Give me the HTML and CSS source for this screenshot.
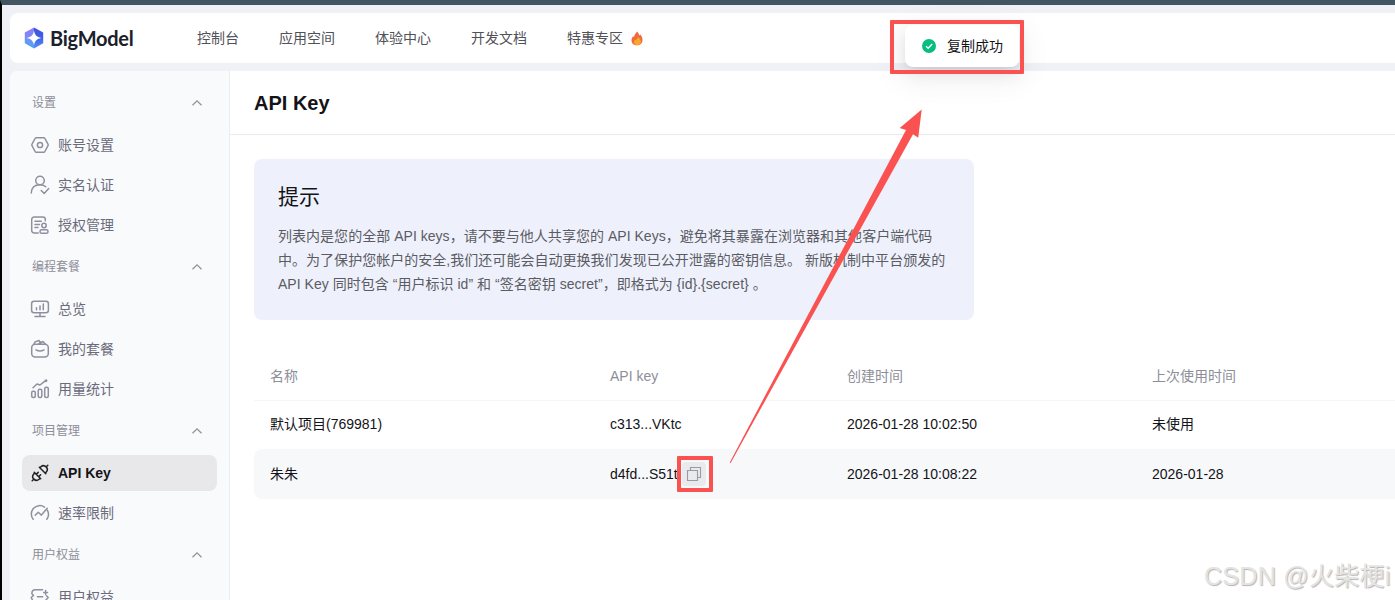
FILE: index.html
```html
<!DOCTYPE html>
<html lang="zh-CN">
<head>
<meta charset="utf-8">
<title>BigModel - API Key</title>
<link rel="stylesheet" href="styles.css">
</head>
<body>
<div class="window">
  <header class="header">
    <div class="logo">
      <svg width="20" height="22" viewBox="0 0 20 22">
        <defs>
          <linearGradient id="lg" x1="0" y1="0" x2="0" y2="1"><stop offset="0" stop-color="#8f7df5"/><stop offset=".45" stop-color="#7c8af8"/><stop offset="1" stop-color="#45a8f8"/></linearGradient>
          <linearGradient id="rg" x1="0" y1="0" x2="0" y2="1"><stop offset="0" stop-color="#3f52e0"/><stop offset=".5" stop-color="#3f62e6"/><stop offset="1" stop-color="#5a90f5"/></linearGradient>
        </defs>
        <path d="M10 .5 .8 5.600v10.600L10 21.500z" fill="url(#lg)"/>
        <path d="M10 .5l9.200 5.100v10.600L10 21.500z" fill="url(#rg)"/>
        <path d="M10 3.800c1 4.600 2.800 6.300 7.200 7.200-4.400.9-6.200 2.600-7.200 7.200-1-4.600-2.800-6.300-7.200-7.200 4.400-.9 6.200-2.600 7.200-7.200z" fill="#fff"/>
      </svg>
      <span class="wordmark">BigModel</span>
    </div>
    <nav class="nav">
      <span>控制台</span><span>应用空间</span><span>体验中心</span><span>开发文档</span>
      <span class="hot">特惠专区
        <svg width="12" height="15" viewBox="0 0 12 15">
          <path d="M6.200.5C7.600 2.300 8 3.300 8.300 4.600c.5-.4.7-.9.700-1.400C10.600 4.900 11.500 7 11.500 9c0 3.300-2.200 5.300-5.500 5.300S.5 12.300.5 9.300c0-2 .8-3.200 1.700-4.400.2.700.4 1 .8 1.300C3.200 4 4.500 2.500 6.200.5z" fill="#ef6a3c"/>
          <path d="M7.500 6.300c1.800 2 2.600 3.300 2.500 4.800-.1 1.700-1.500 3-3.600 3s-3.400-1.100-3.400-2.800c0-1.300.6-2 1.300-2.900.4.500.6.7 1 .8.300-1.200 1-2.200 2.200-2.900z" fill="#f9a928"/>
        </svg>
      </span>
    </nav>
  </header>
  <div class="body">
    <aside class="sidebar">
      <div class="group">设置<svg class="chev" viewBox="0 0 12 8"><path d="M1.500 6.300 6 1.800l4.500 4.500"/></svg></div>
      <div class="item"><svg class="ico" viewBox="0 0 20 20"><path d="M6.400 2.700h7.200a1.500 1.500 0 0 1 1.300.8l3.100 5.700a1.500 1.500 0 0 1 0 1.500l-3.100 5.800a1.500 1.500 0 0 1-1.300.8H6.400a1.500 1.500 0 0 1-1.300-.8L2 10.700a1.500 1.500 0 0 1 0-1.500l3.100-5.700a1.500 1.500 0 0 1 1.300-.8z"/><circle cx="10" cy="10" r="2.600"/></svg>账号设置</div>
      <div class="item"><svg class="ico" viewBox="0 0 20 20"><circle cx="10" cy="5.500" r="4.300"/><path d="M1.300 18c.2-5.200 3.600-8.200 8.700-8.200 2.400 0 4.300.6 5.800 1.900M11.200 15.500l3 3 4.500-5"/></svg>实名认证</div>
      <div class="item"><svg class="ico" viewBox="0 0 20 20"><path d="M8.200 18H4.200a2.500 2.500 0 0 1-2.500-2.500v-11A2.500 2.500 0 0 1 4.200 2h8.600a2.500 2.500 0 0 1 2.500 2.500v1.300M5 6.200h6.300M5 9.500h4.500M5 12.500h3"/><circle cx="14" cy="10.500" r="2.200"/><rect x="10" y="14.800" width="8" height="3.500" rx="1.600"/></svg>授权管理</div>
      <div class="group">编程套餐<svg class="chev" viewBox="0 0 12 8"><path d="M1.500 6.300 6 1.800l4.500 4.500"/></svg></div>
      <div class="item"><svg class="ico" viewBox="0 0 20 20"><rect x="1.600" y="2.200" width="16.800" height="11.600" rx="2.500"/><path d="M10 14v3M5 17.400h10M6.500 8.800v2M10 7v3.800M13.300 5v5.800"/></svg>总览</div>
      <div class="item"><svg class="ico" viewBox="0 0 20 20"><rect x="1.700" y="5.300" width="16.600" height="12.700" rx="3.500"/><path d="M6 10.800c2.500 1.500 5.500 1.500 8 0M4 5l1-2.100 4-1.400 2.200 3M9 4.500l4-2 2.500 2.800"/></svg>我的套餐</div>
      <div class="item"><svg class="ico" viewBox="0 0 20 20"><rect x="1.700" y="12.300" width="3.600" height="6.200" rx="1.500"/><rect x="8.200" y="10.200" width="3.600" height="8.300" rx="1.500"/><rect x="14.700" y="8.200" width="3.600" height="10.300" rx="1.500"/><path d="M3 8.800 7 5l3 1 5-3.800"/><circle cx="16" cy="1.700" r=".7"/></svg>用量统计</div>
      <div class="group">项目管理<svg class="chev" viewBox="0 0 12 8"><path d="M1.500 6.300 6 1.800l4.500 4.500"/></svg></div>
      <div class="item active"><svg class="ico" viewBox="0 0 20 20"><path d="M4.200 9.300l6.500 6.500M4.800 9.900l-1 1a3.750 3.750 0 0 0 5.300 5.300l1-1M9.300 4.200l6.500 6.500M9.900 4.800l1-1a3.750 3.750 0 0 1 5.300 5.300l-1 1M2.200 17.800l1.500-1.500M16.300 3.700l1.500-1.500M6.300 11.300l1.900-1.900M8.700 13.700l1.900-1.900"/></svg>API Key</div>
      <div class="item"><svg class="ico" viewBox="0 0 20 20"><path d="M3.200 16.300A8.400 8.400 0 0 1 14.500 4.100M17.300 7.200a8.400 8.400 0 0 1-.5 9.100M5.200 12.300l3-3 3.200 2.800 5.800-6.800"/></svg>速率限制</div>
      <div class="group">用户权益<svg class="chev" viewBox="0 0 12 8"><path d="M1.500 6.300 6 1.800l4.500 4.500"/></svg></div>
      <div class="item"><svg class="ico" viewBox="0 0 20 20"><path d="M12.500 2.700H5.200a3.500 3.500 0 0 0-3.300 3.500v.6L3.500 8.500 1.200 10.500l2.500 5h10l4.500-5-1.700-1.700M7.500 9.700h5.200M13.700 5.500h3.800M15.600 3.600v3.800"/></svg>用户权益</div>
    </aside>
    <main class="content">
      <h1 class="page-title">API Key</h1>
      <section class="tip">
        <h2>提示</h2>
        <p>列表内是您的全部 API keys，请不要与他人共享您的 API Keys，避免将其暴露在浏览器和其他客户端代码<br>中。为了保护您帐户的安全,我们还可能会自动更换我们发现已公开泄露的密钥信息。 新版机制中平台颁发的<br>API Key 同时包含 “用户标识 id” 和 “签名密钥 secret”，即格式为 {id}.{secret} 。</p>
      </section>
      <div class="table">
        <div class="row head"><span>名称</span><span>API key</span><span>创建时间</span><span>上次使用时间</span></div>
        <div class="row first"><span>默认项目(769981)</span><span>c313...VKtc</span><span>2026-01-28 10:02:50</span><span>未使用</span></div>
        <div class="row hover"><span>朱朱</span><span class="key">d4fd...S51t<i class="copy"><svg width="16" height="16" viewBox="0 0 16 16"><path d="M1.500 4.500h10v10h-10zM4.500 4.500v-3h10v10h-3"/></svg></i></span><span>2026-01-28 10:08:22</span><span>2026-01-28</span></div>
      </div>
    </main>
  </div>
</div>
<div class="toast"><svg width="14" height="14" viewBox="0 0 14 14"><circle cx="7" cy="7" r="7" fill="#07bd7f"/><path d="M4 7.200l2.200 2.100L10.200 5" fill="none" stroke="#fff" stroke-width="1.300"/></svg>复制成功</div>
<div class="mark mark-toast"></div>
<div class="mark mark-copy"></div>
<svg class="arrow" width="194" height="356" viewBox="0 0 194 356"><path d="M191.700.5 169.700 19l6.300 2L-.4 353.700l.9.500L183 25.200l5.200 3.600z"/></svg>
<div class="watermark">CSDN @火柴梗i</div>
</body>
</html>
```
FILE: styles.css
```css
* { box-sizing: border-box; }
body {
  margin: 0;
  width: 1395px;
  height: 600px;
  overflow: hidden;
  position: relative;
  font: 14px/20px "Liberation Sans", "Noto Sans CJK SC", sans-serif;
  color: #131318;
}
.window {
  height: 600px;
  overflow: hidden;
  background: #f0f1f6;
  border-top: 5px solid #435560;
  border-left: 2px solid #000;
  padding: 8px 0 0 8px;
}
.header {
  height: 50px;
  display: flex;
  align-items: center;
  background: #fff;
  border-radius: 8px 0 0 8px;
  padding-left: 14px;
}
.logo { display: flex; align-items: center; width: 173px; gap: 6px; }
.logo svg { flex: none; }
.wordmark { font: 700 20px/24px Lato, sans-serif; letter-spacing: -.25px; color: #1b202b; }
.nav { display: flex; gap: 40px; color: #515158; white-space: nowrap; }
.hot { display: flex; align-items: center; gap: 8px; }
.body {
  margin-top: 8px;
  height: 529px;
  display: flex;
  background: #fff;
  border-radius: 8px 0 0 0;
  overflow: hidden;
}
.sidebar {
  flex: none;
  width: 220px;
  height: 529px;
  overflow: hidden;
  padding: 8px 12px 0;
  background: #f9fafc;
  border-right: 1px solid #ecedf1;
}
.group {
  height: 48px;
  padding: 0 14px 0 10px;
  display: flex;
  align-items: center;
  justify-content: space-between;
  font-size: 12px;
  color: #8d8e99;
}
.chev { width: 12px; height: 8px; fill: none; stroke: #92939d; stroke-width: 1.3; }
.item {
  height: 36px;
  margin-bottom: 4px;
  padding-left: 8px;
  display: flex;
  align-items: center;
  gap: 8px;
  border-radius: 8px;
  color: #6b6b7b;
}
.item:has(+ .group) { margin-bottom: 0; }
.ico { width: 20px; height: 20px; flex: none; fill: none; stroke: #8f8f9f; stroke-width: 1.5; stroke-linecap: round; stroke-linejoin: round; }
.active { background: #e8e8ea; color: #131318; font-weight: 700; }
.active .ico { stroke: #202024; }
.content { flex: 1; min-width: 0; }
.page-title {
  margin: 0;
  height: 64px;
  padding-left: 24px;
  border-bottom: 1px solid #ebebee;
  font-size: 20px;
  line-height: 64px;
}
.tip {
  width: 720px;
  height: 161px;
  margin: 24px 0 0 24px;
  padding: 24px;
  border-radius: 8px;
  background: #eef1fb;
}
.tip h2 { margin: 0 0 14px; font-size: 21px; font-weight: 400; line-height: 27px; }
.tip p { margin: 0; line-height: 24px; letter-spacing: .03px; color: #5b5b63; white-space: nowrap; }
.table { margin: 32px 0 0 24px; }
.row {
  display: grid;
  grid-template-columns: 340px 237px 305px 1fr;
  align-items: center;
  height: 48px;
  padding-left: 16px;
}
.head { height: 49px; color: #8d8e99; border-bottom: 1px solid #f4f5f7; }
.first { padding-bottom: 2px; }
.hover { height: 50px; background: #f7f8fa; border-radius: 8px 0 0 8px; }
.key { display: flex; align-items: center; gap: 4px; }
.copy { width: 24px; height: 24px; border-radius: 4px; background: #e9eaec; display: flex; align-items: center; justify-content: center; }
.copy svg { fill: none; stroke: #9a9aa6; stroke-width: 1.1; }
.toast {
  position: absolute;
  left: 905px;
  top: 25px;
  width: 114px;
  height: 42px;
  padding-left: 17px;
  display: flex;
  align-items: center;
  gap: 11px;
  border-radius: 8px;
  background: #fff;
  white-space: nowrap;
  box-shadow: 0 6px 16px rgba(0,0,0,.08), 0 3px 6px -4px rgba(0,0,0,.12), 0 9px 28px 8px rgba(0,0,0,.05);
}
.mark { position: absolute; border: 4px solid #fa5251; border-radius: 1px; }
.mark-toast { left: 890px; top: 20px; width: 134px; height: 54px; }
.mark-copy { left: 677px; top: 456px; width: 36px; height: 36px; }
.arrow { position: absolute; left: 730px; top: 109px; fill: #fa5251; }
.watermark {
  position: absolute;
  left: 1204px;
  top: 560px;
  font-size: 25px;
  line-height: 32px;
  letter-spacing: .3px;
  white-space: nowrap;
  color: #e4e4e4;
  text-shadow: 1px 1px 1px #b4b4b4;
}
```
